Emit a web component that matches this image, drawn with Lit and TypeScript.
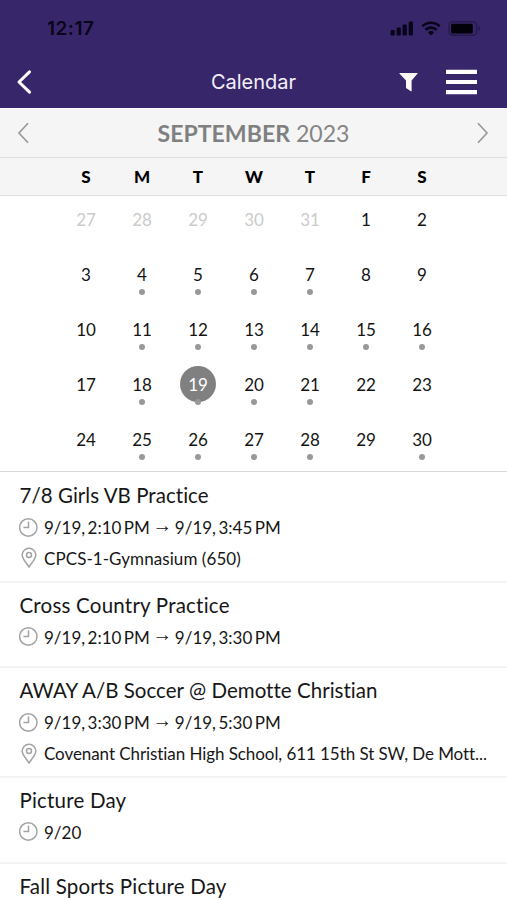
import { LitElement, html, css, nothing } from "lit";
import { customElement, property } from "lit/decorators.js";
import { classMap } from "lit/directives/class-map.js";
import { styleMap } from "lit/directives/style-map.js";

interface Day {
  n: number;
  out?: boolean;
  dot?: boolean;
  selected?: boolean;
}

interface CalEvent {
  title: string;
  tracking: number;
  start?: string;
  end?: string;
  place?: string;
  placeTracking?: number;
}

const WEEKDAYS = ["S", "M", "T", "W", "T", "F", "S"];
const BUSY = new Set([4, 5, 6, 7, 11, 12, 13, 14, 15, 16, 18, 19, 20, 21, 25, 26, 27, 28, 30]);

const DAYS: Day[] = [
  ...[27, 28, 29, 30, 31].map((n) => ({ n, out: true })),
  ...Array.from({ length: 30 }, (_, i) => ({
    n: i + 1,
    dot: BUSY.has(i + 1),
    selected: i + 1 === 19,
  })),
];

const EVENTS: CalEvent[] = [
  {
    title: "7/8 Girls VB Practice",
    tracking: 0.04,
    start: "9/19, 2:10 PM",
    end: "9/19, 3:45 PM",
    place: "CPCS-1-Gymnasium (650)",
    placeTracking: 0.07,
  },
  { title: "Cross Country Practice", tracking: 0.22, start: "9/19, 2:10 PM", end: "9/19, 3:30 PM" },
  {
    title: "AWAY A/B Soccer @ Demotte Christian",
    tracking: 0.03,
    start: "9/19, 3:30 PM",
    end: "9/19, 5:30 PM",
    place: "Covenant Christian High School, 611 15th St SW, De Mott...",
    placeTracking: -0.07,
  },
  { title: "Picture Day", tracking: 0.2, start: "9/20" },
  { title: "Fall Sports Picture Day", tracking: 0.18 },
];

@customElement("status-bar")
class StatusBar extends LitElement {
  static styles = css`
    :host {
      display: flex;
      justify-content: space-between;
      align-items: center;
      height: 57px;
      box-sizing: border-box;
      padding: 0 25px 1px 47px;
      color: #08041a;
    }
    .time {
      font: 600 19px/24px Inter, sans-serif;
      letter-spacing: 0.5px;
      padding-top: 1px;
    }
    svg {
      display: block;
    }
  `;
  render() {
    return html`
      <span class="time">12:17</span>
      <svg width="92" height="18" viewBox="0 0 92 18">
        <g fill="#08041a">
          <rect x="0.6" y="11" width="4.2" height="5.5" rx="1.2" />
          <rect x="6.6" y="8.5" width="4.2" height="8" rx="1.2" />
          <rect x="12.6" y="5.5" width="4.2" height="11" rx="1.2" />
          <rect x="18.7" y="2.5" width="4.2" height="14" rx="1.2" />
          <path d="M41 16.4l-3.2-3.2a4.6 4.6 0 0 1 6.4 0z" />
        </g>
        <g fill="none" stroke="#08041a" stroke-width="2.6">
          <path d="M32.3 7.2a12.6 12.6 0 0 1 17.4 0" />
          <path d="M35.4 10.8a8.2 8.2 0 0 1 11.2 0" />
        </g>
        <rect x="59" y="2.8" width="27.6" height="13.4" rx="3.6" fill="none" stroke="#261a4b" stroke-width="1.4" />
        <rect x="61" y="4.7" width="21.8" height="9.8" rx="1.5" fill="#030108" />
        <path d="M88.3 7v5c1.200-.4 2-1.300 2-2.500s-.8-2.100-2-2.500z" fill="#261a4b" />
      </svg>
    `;
  }
}

@customElement("nav-bar")
class NavBar extends LitElement {
  static styles = css`
    :host {
      display: grid;
      grid-template-columns: 1fr auto 1fr;
      align-items: center;
      height: 51px;
      box-sizing: border-box;
      padding: 0 30.5px 1px 15.5px;
      color: #f4f0fa;
    }
    .title {
      font: 400 20px/24px Inter, sans-serif;
      padding-left: 15px;
    }
    .actions {
      display: flex;
      justify-content: flex-end;
      align-items: center;
      gap: 28px;
    }
    svg {
      display: block;
    }
  `;
  render() {
    return html`
      <svg width="16" height="26" viewBox="0 0 16 26">
        <path d="M13.5 2.8L3 13l10.500 10.200" fill="none" stroke="#fff" stroke-width="3" stroke-linecap="round" stroke-linejoin="round" />
      </svg>
      <span class="title">Calendar</span>
      <div class="actions">
        <svg width="19" height="20" viewBox="0 0 19 20">
          <path d="M.6 1h17.800c.3 0 .4.400.2.600L12.600 8.500v10.500c0 .4-.4.500-.7.300L7.400 16.200c-.2-.2-.4-.4-.4-.7V8.500L.4 1.600C.2 1.400.3 1 .6 1z" fill="#fdf9f4" />
        </svg>
        <svg width="31" height="26" viewBox="0 0 31 26">
          <path d="M0 2.800h31M0 13h31M0 23.200h31" stroke="#fff" stroke-width="4.200" />
        </svg>
      </div>
    `;
  }
}

@customElement("month-calendar")
class MonthCalendar extends LitElement {
  static styles = css`
    :host {
      display: block;
      font-family: Lato, sans-serif;
      border-bottom: 1px solid #dadada;
      margin-bottom: 1px;
    }
    .month {
      display: flex;
      justify-content: space-between;
      align-items: center;
      height: 50px;
      box-sizing: border-box;
      padding: 0 18px 0 17px;
      background: #f5f5f5;
      border-top: 1px solid #fff;
      border-bottom: 1px solid #dedede;
    }
    .label {
      font-size: 23.1px;
      line-height: 30px;
      color: #858585;
      padding-left: 1px;
    }
    .label b {
      font-weight: 700;
      color: #808080;
    }
    .grid {
      display: grid;
      grid-template-columns: repeat(7, 56px);
      padding-left: 58px;
    }
    .week {
      height: 38px;
      box-sizing: border-box;
      align-items: center;
      background: #f5f5f5;
      border-bottom: 1px solid #dedede;
      font-weight: 900;
      font-size: 17px;
      text-align: center;
      color: #000;
    }
    .days {
      grid-auto-rows: 55px;
      padding-top: 5px;
      height: 270px;
      color: #141414;
    }
    .day {
      display: flex;
      flex-direction: column;
      align-items: center;
    }
    .num {
      width: 36px;
      height: 36px;
      border-radius: 50%;
      font-size: 17px;
      line-height: 37px;
      text-align: center;
    }
    .out {
      color: #cbcbcb;
    }
    .selected .num {
      background: #808080;
      color: #fff;
    }
    .dot {
      width: 6px;
      height: 6px;
      margin-top: -3px;
      border-radius: 50%;
      background: #989898;
    }
    svg {
      display: block;
    }
  `;
  render() {
    return html`
      <div class="month">
        <svg width="13" height="24" viewBox="0 0 13 24">
          <path d="M11 2.200L2 12l9 9.800" fill="none" stroke="#9a9a9a" stroke-width="1.700" />
        </svg>
        <span class="label"><b>SEPTEMBER</b> 2023</span>
        <svg width="13" height="24" viewBox="0 0 13 24">
          <path d="M2 2.200L11 12l-9 9.800" fill="none" stroke="#9a9a9a" stroke-width="1.700" />
        </svg>
      </div>
      <div class="grid week">${WEEKDAYS.map((d) => html`<span>${d}</span>`)}</div>
      <div class="grid days">
        ${DAYS.map(
          (d) => html`<div class=${classMap({ day: true, out: !!d.out, selected: !!d.selected })}>
            <span class="num">${d.n}</span>
            ${d.dot ? html`<span class="dot"></span>` : nothing}
          </div>`,
        )}
      </div>
    `;
  }
}

@customElement("event-item")
class EventItem extends LitElement {
  @property({ attribute: false }) event!: CalEvent;

  static styles = css`
    :host {
      display: block;
      box-sizing: border-box;
      padding: 6px 19px 9.3px;
      border-bottom: 2px solid #f3f3f3;
      font-family: Lato, sans-serif;
      font-variant-ligatures: none;
      color: #161616;
    }
    .title {
      font-size: 20.5px;
      line-height: 32px;
      height: 33px;
      padding-left: 0.5px;
      white-space: nowrap;
    }
    .row {
      display: flex;
      align-items: center;
      height: 31px;
      font-size: 17px;
    }
    .time {
      margin-bottom: 4.6px;
      word-spacing: -1.9px;
    }
    .time.more {
      margin-bottom: 0;
    }
    .place {
      margin-bottom: -2.4px;
      height: 30.6px;
    }
    .text {
      flex: 1;
      display: flex;
      align-items: center;
      white-space: nowrap;
    }
    .arrow {
      width: 25px;
      height: 20px;
      line-height: 15px;
      text-align: center;
      font-family: "Liberation Serif", serif;
      font-size: 19.5px;
    }
    svg {
      flex: none;
      width: 19px;
      height: 22px;
      margin-right: 6px;
      fill: none;
      stroke: #a3a3a3;
      stroke-width: 1.5;
    }
  `;
  render() {
    const e = this.event;
    return html`
      <div class="title" style=${styleMap({ letterSpacing: `${e.tracking}px` })}>${e.title}</div>
      ${e.start
        ? html`<div class=${classMap({ row: true, time: true, more: !!e.place })}>
            <svg viewBox="0 0 19 22"><circle cx="9.3" cy="10.5" r="8.7" /><path d="M9.5 4.500V10.500H4.400" /></svg>
            <div class="text">
              <span>${e.start}</span>
              ${e.end ? html`<span class="arrow">→</span><span>${e.end}</span>` : nothing}
            </div>
          </div>`
        : nothing}
      ${e.place
        ? html`<div class="row place">
            <svg viewBox="0 0 19 22">
              <path d="M10 20C7 15.500 3.200 11.800 3.200 8a6.800 6.800 0 0 1 13.600 0c0 3.800-3.800 7.500-6.800 12z" />
              <circle cx="10" cy="8" r="2.5" />
            </svg>
            <span class="text" style=${styleMap({ letterSpacing: `${e.placeTracking ?? 0}px` })}>${e.place}</span>
          </div>`
        : nothing}
    `;
  }
}

@customElement("app-root")
class AppRoot extends LitElement {
  static styles = css`
    :host {
      display: block;
      height: 900px;
      overflow: hidden;
      background: #fff;
    }
    .header {
      background: #38266b;
      height: 108px;
    }
  `;
  render() {
    return html`
      <div class="header">
        <status-bar></status-bar>
        <nav-bar></nav-bar>
      </div>
      <month-calendar></month-calendar>
      ${EVENTS.map((e) => html`<event-item .event=${e}></event-item>`)}
    `;
  }
}
